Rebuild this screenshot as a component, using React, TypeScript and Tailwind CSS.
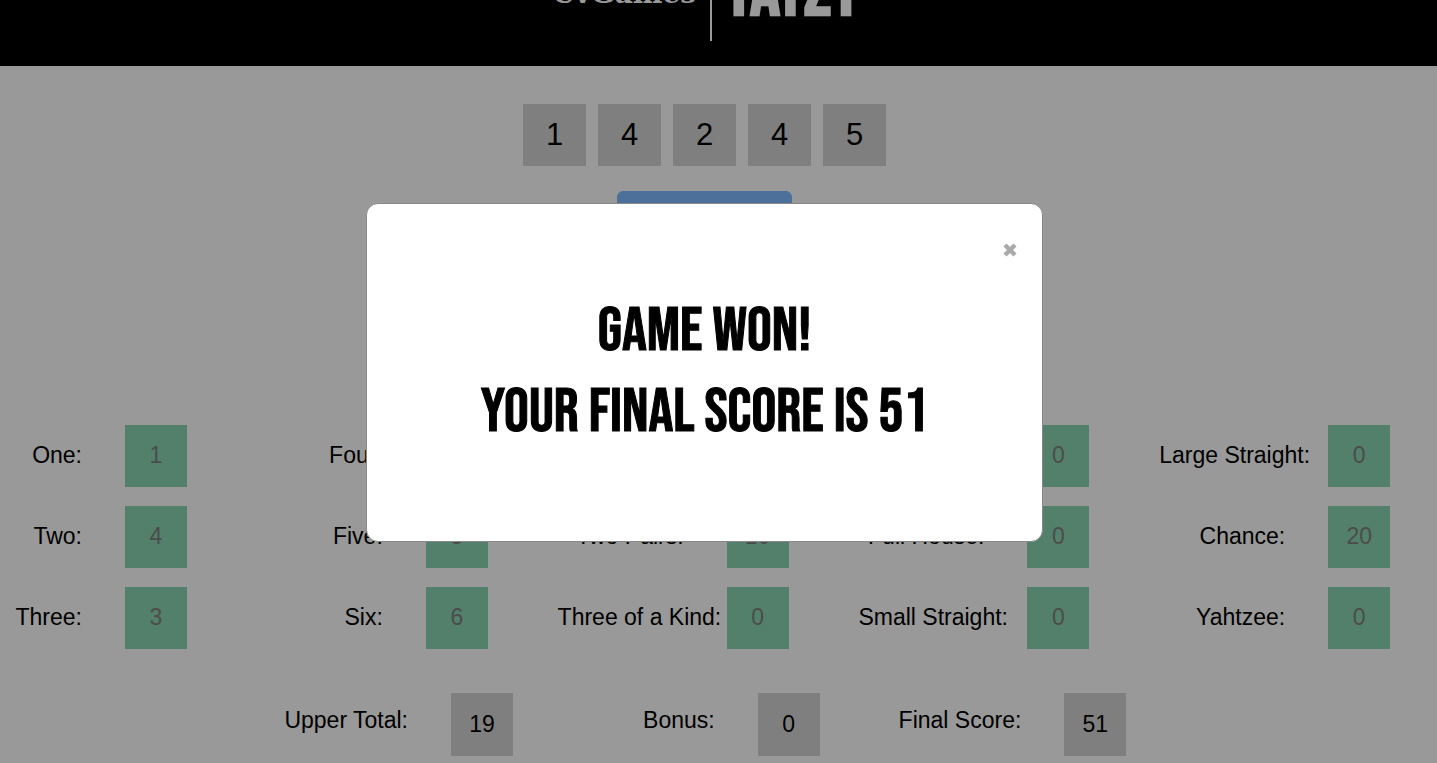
const dice = [1, 4, 2, 4, 5];

const columns: [string, number][][] = [
  [["One", 1], ["Two", 4], ["Three", 3]],
  [["Four", 0], ["Five", 5], ["Six", 6]],
  [["One Pair", 2], ["Two Pairs", 10], ["Three of a Kind", 0]],
  [["Four of a Kind", 0], ["Full House", 0], ["Small Straight", 0]],
  [["Large Straight", 0], ["Chance", 20], ["Yahtzee", 0]],
];

const totals: [string, number][] = [
  ["Upper Total", 19],
  ["Bonus", 0],
  ["Final Score", 51],
];

function Header() {
  return (
    <header className="flex h-[66px] items-end justify-center overflow-hidden bg-black pr-[15px] pb-[25px] text-white">
      <div className="flex flex-1 justify-end">
        <span className="mr-3.5 mb-[31px] font-['Roboto_Slab','DejaVu_Serif',serif] text-[28px] leading-[32px] font-bold whitespace-nowrap">
          CvGames
        </span>
      </div>
      <span className="h-20 w-0.5 shrink-0 bg-white" />
      <div className="flex flex-1">
        <span className="mb-3 ml-3 font-['Bebas_Neue',sans-serif] text-[75px] leading-[72px] font-bold">
          YATZY
        </span>
      </div>
    </header>
  );
}

function ScoreField({ label, value }: { label: string; value: number }) {
  const id = label.toLowerCase().replace(/ /g, "-");
  return (
    <div className="flex items-center">
      <label htmlFor={id} className="mr-[43px] w-[126px] shrink-0 pb-0.5 text-right whitespace-nowrap">
        {label}:
      </label>
      <button
        id={id}
        disabled
        className="size-[62px] shrink-0 bg-[#8bd5b1] pb-0.5 text-[#7f7f7f]"
      >
        {value}
      </button>
    </div>
  );
}

function WinDialog() {
  return (
    <div className="fixed inset-0 flex items-start justify-center bg-black/40 pt-[203px] pr-7">
      <section
        role="dialog"
        aria-modal="true"
        className="flex w-[48%] flex-col rounded-xl border border-[#888] bg-white px-6 pt-[34px] pb-[88px]"
      >
        <button aria-label="Close" className="flex h-6 w-4 items-center justify-center self-end text-[#aaa]">
          <svg viewBox="0 0 14 14" className="size-3.5" fill="none" stroke="currentColor" strokeWidth="4.4">
            <path d="M2 2 L12 12 M12 2 L2 12" />
          </svg>
        </button>
        <h1 className="mt-[29px] text-center font-['Bebas_Neue',sans-serif] text-[62px] leading-[81px] font-normal whitespace-nowrap [-webkit-text-stroke:1px_#000]">
          GAME WON!
          <br />
          YOUR FINAL SCORE IS 51
        </h1>
      </section>
    </div>
  );
}

export default function App() {
  return (
    <div className="min-h-screen overflow-x-hidden bg-white font-['Liberation_Sans',Arial,sans-serif] text-[23px] leading-7 text-black">
      <Header />
      <main>
        <div className="flex flex-col items-center pt-[38px] pr-7">
          <div className="flex gap-3">
            {dice.map((value, index) => (
              <button key={index} className="h-[62px] w-[63px] bg-[#d4d4d4] text-[31px]">
                {value}
              </button>
            ))}
          </div>
          <button className="mt-[25px] h-[62px] w-[175px] rounded-md bg-[#7fbbff]">Roll</button>
        </div>
        <div className="mt-[172px] -mr-[23px] -ml-[44px] grid grid-cols-5">
          {columns.map((fields, index) => (
            <div key={index} className="flex flex-col gap-[19px]">
              {fields.map(([label, value]) => (
                <ScoreField key={label} label={label} value={value} />
              ))}
            </div>
          ))}
        </div>
        <div className="mt-11 grid grid-cols-3 pr-[235px] pl-[282px]">
          {totals.map(([label, value]) => (
            <div key={label} className="flex items-start">
              <span className="mr-[43px] w-[126px] text-right leading-[54px] whitespace-nowrap">{label}:</span>
              <output className="flex h-[63px] w-[62px] items-center justify-center bg-[#d4d4d4] pb-0.5">{value}</output>
            </div>
          ))}
        </div>
      </main>
      <WinDialog />
    </div>
  );
}
